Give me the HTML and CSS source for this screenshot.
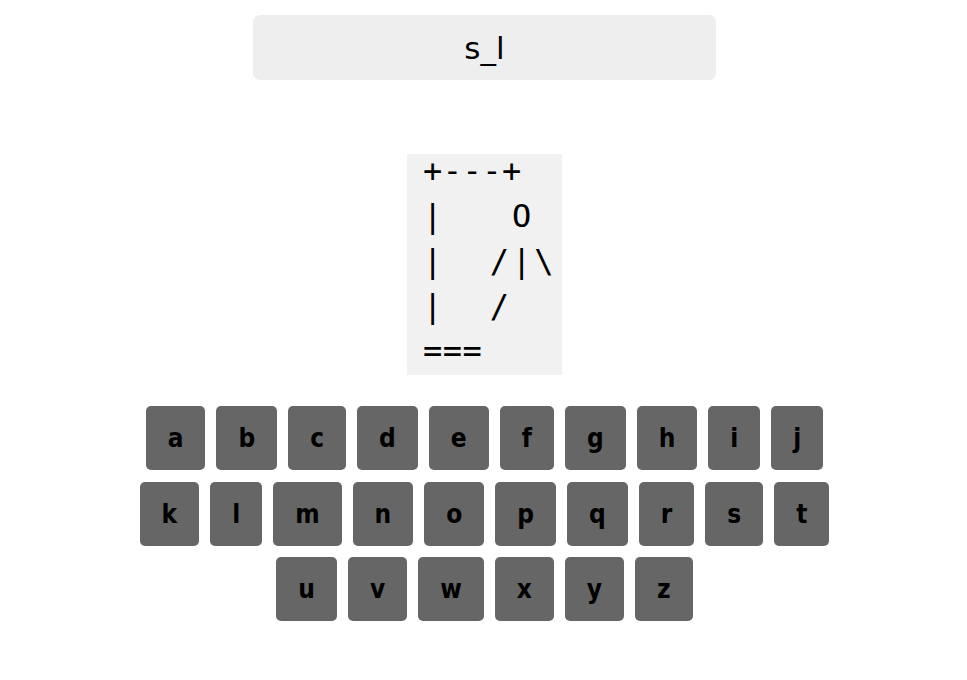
FILE: index.html
```html
<!DOCTYPE html>
<html lang="en">
<head>
    <meta charset="UTF-8">
    <meta name="viewport" content="width=device-width, initial-scale=1.0">
    <title>Hangman</title>
    <link rel="stylesheet" href="styles.css">
</head>
<body>
    <div class="game">
        <!-- guessed word -->
        <div class="word">s_l</div>

        <!-- gallows -->
        <div class="gallows">
            <pre class="gallows-top">+---+</pre>
            <pre class="gallows-mid">|   O
|  /|\
|  /</pre>
            <pre class="gallows-bottom">===</pre>
        </div>

        <!-- keyboard -->
        <div class="keyboard">
            <div class="key-row">
                <button class="key">a</button>
                <button class="key">b</button>
                <button class="key">c</button>
                <button class="key">d</button>
                <button class="key">e</button>
                <button class="key">f</button>
                <button class="key">g</button>
                <button class="key">h</button>
                <button class="key">i</button>
                <button class="key">j</button>
            </div>
            <div class="key-row">
                <button class="key">k</button>
                <button class="key">l</button>
                <button class="key">m</button>
                <button class="key">n</button>
                <button class="key">o</button>
                <button class="key">p</button>
                <button class="key">q</button>
                <button class="key">r</button>
                <button class="key">s</button>
                <button class="key">t</button>
            </div>
            <div class="key-row">
                <button class="key">u</button>
                <button class="key">v</button>
                <button class="key">w</button>
                <button class="key">x</button>
                <button class="key">y</button>
                <button class="key">z</button>
            </div>
        </div>
    </div>
</body>
</html>
```

FILE: styles.css
```css
body {
    margin: 0;
    background: white;
    font-family: "DejaVu Sans", sans-serif;
}

.game {
    display: flex;
    flex-direction: column;
    align-items: center;
    padding-top: 15px;
    padding-left: 2px;
}

.word {
    width: 463px;
    height: 65px;
    background-color: #eeeeee;
    border-radius: 7px;
    display: flex;
    align-items: center;
    justify-content: center;
    font-size: 31px;
    color: #000;
}

.gallows {
    display: flow-root;
    margin-top: 74px;
    width: 155px;
    box-sizing: border-box;
    padding: 0 0 0 16px;
    background-color: #f1f1f1;
}

.gallows pre {
    margin: 0;
    font-family: "DejaVu Sans Mono", monospace;
    font-size: 32px;
    line-height: 45px;
    color: #000;
    letter-spacing: 0.5px;
}

.gallows-top {
    margin-top: -5px !important;
}

.gallows-mid {
    letter-spacing: 3px !important;
}

.gallows-bottom {
    margin-bottom: 1px !important;
}

.keyboard {
    margin-top: 31px;
    display: flex;
    flex-direction: column;
    align-items: center;
    gap: 11.5px;
}

.key-row {
    display: flex;
    gap: 11px;
}

.key {
    height: 64px;
    padding: 0 22px;
    border: none;
    border-radius: 5px;
    background-color: #666666;
    color: #000;
    font-family: "DejaVu Sans Condensed", sans-serif;
    font-weight: bold;
    font-size: 26px;
    cursor: pointer;
}
```
